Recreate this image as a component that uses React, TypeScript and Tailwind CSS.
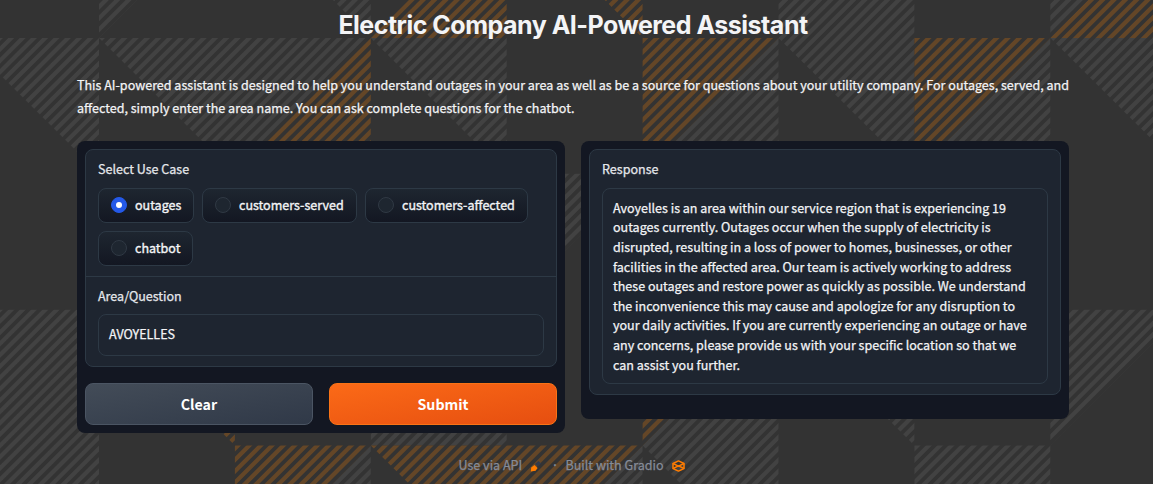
import React from "react";

const S = 135.9;
const X0 = -36.9;
const Y0 = -98;

type Tri = [col: number, row: number, shape: "ul" | "lr" | "ur" | "full", color: "g" | "o"];

const tiles: Tri[] = [
  [1, 0, "ul", "g"], [2, 0, "ur", "g"], [3, 0, "lr", "o"], [4, 0, "ur", "o"], [6, 0, "full", "g"], [8, 0, "ul", "g"], [8, 0, "lr", "o"],
  [0, 1, "ur", "g"], [1, 1, "ur", "g"], [2, 1, "ul", "g"], [2, 1, "lr", "o"], [3, 1, "ur", "g"], [5, 1, "ul", "o"], [5, 1, "lr", "g"],
  [6, 1, "ur", "g"], [7, 1, "ul", "o"], [7, 1, "lr", "g"], [8, 1, "ur", "g"],
  [4, 2, "ul", "g"],
  [0, 3, "full", "g"], [1, 3, "ur", "o"], [3, 3, "full", "g"], [5, 3, "ul", "o"], [5, 3, "lr", "g"], [6, 3, "ur", "g"], [8, 3, "ul", "g"],
  [0, 4, "full", "g"], [2, 4, "ul", "o"], [2, 4, "lr", "g"], [3, 4, "ur", "o"], [4, 4, "ul", "o"], [4, 4, "lr", "g"], [5, 4, "ur", "g"], [7, 4, "full", "g"],
];

function points([c, r, shape]: Tri) {
  const x = X0 + c * S;
  const y = Y0 + r * S;
  const p = {
    ul: [[0, 0], [S, 0], [0, S]],
    lr: [[S, 0], [S, S], [0, S]],
    ur: [[0, 0], [S, 0], [S, S]],
    full: [[0, 0], [S, 0], [S, S], [0, S]],
  }[shape];
  return p.map(([a, b]) => `${x + a},${y + b}`).join(" ");
}

const PERIOD = S / 12;
const H = 5 * S;
const stripes = Array.from({ length: 172 }, (_, i) => {
  const x = X0 + i * PERIOD;
  return `M${x} ${Y0}h6l${-H} ${H}h-6Z`;
}).join("");

function Backdrop() {
  return (
    <svg className="absolute inset-0 -z-10" width="1153" height="484" aria-hidden="true">
      {[["g", "#424242"], ["o", "#644627"]].map(([id, fill]) => (
        <g key={id}>
          <clipPath id={id}>
            {tiles.filter((t) => t[3] === id).map((t, i) => <polygon key={i} points={points(t)} />)}
          </clipPath>
          <path d={stripes} fill={fill} clipPath={`url(#${id})`} />
        </g>
      ))}
    </svg>
  );
}

function Radio({ label, checked, width }: { label: string; checked?: boolean; width: string }) {
  return (
    <label className={`flex h-[35px] items-center rounded-lg border border-[#2d3945] bg-linear-to-b from-[#1e2630] to-[#131722] pl-3 text-[#f3f4f6] ${width}`}>
      <span className={`mb-px flex size-4 items-center justify-center rounded-full border ${checked ? "border-[#2459e8] bg-[#2459e8]" : "border-[#303944] bg-[#1e2630]"}`}>
        {checked && <span className="size-1.5 rounded-full bg-white" />}
      </span>
      <span className="mb-px ml-2 leading-[18px] whitespace-nowrap [-webkit-text-stroke:0.35px_#f3f4f6]">{label}</span>
    </label>
  );
}

const response = [
  "Avoyelles is an area within our service region that is experiencing 19",
  "outages currently. Outages occur when the supply of electricity is",
  "disrupted, resulting in a loss of power to homes, businesses, or other",
  "facilities in the affected area. Our team is actively working to address",
  "these outages and restore power as quickly as possible. We understand",
  "the inconvenience this may cause and apologize for any disruption to",
  "your daily activities. If you are currently experiencing an outage or have",
  "any concerns, please provide us with your specific location so that we",
  "can assist you further.",
];

export default function App() {
  return (
    <div className="relative isolate h-[484px] w-[1153px] overflow-hidden bg-[#333333] px-[77px] font-['Noto_Sans_CJK_JP','Noto_Sans_CJK_SC',sans-serif] text-[12.54px] text-[#f3f4f6] [-webkit-text-stroke:0.25px_currentColor]">
      <Backdrop />
      <h1 className="h-[73px] pt-[7px] pr-[7px] text-center font-['Inter',sans-serif] text-[25px] leading-9 font-bold tracking-[-0.5px] whitespace-nowrap [-webkit-text-stroke:0]">
        Electric Company AI-Powered Assistant
      </h1>
      <p className="h-[68px] leading-[23px] whitespace-nowrap">
        This AI-powered assistant is designed to help you understand outages in your area as well as be a source for questions about your utility company. For outages, served, and
        <br />
        affected, simply enter the area name. You can ask complete questions for the chatbot.
      </p>
      <main className="flex items-start gap-4">
        <section className="h-[292px] w-[488px] rounded-lg bg-[#131722] p-2">
          <div className="h-[218px] overflow-hidden rounded-lg border border-[#2d3945] bg-[#1e2530]">
            <div className="h-[127px] border-b border-[#2d3945] px-3 pt-[9px]">
              <div className="leading-5 text-[#e5e7eb]">Select Use Case</div>
              <div className="mt-[9px] flex flex-wrap gap-2">
                <Radio label="outages" checked width="w-24" />
                <Radio label="customers-served" width="w-[155px]" />
                <Radio label="customers-affected" width="w-[163px]" />
                <Radio label="chatbot" width="w-[95px]" />
              </div>
            </div>
            <div className="px-3 pt-[9px]">
              <div className="leading-5 text-[#e5e7eb]">Area/Question</div>
              <div className="mt-2 h-[42px] rounded-lg border border-[#2d3945] px-2.5 leading-[38px]">AVOYELLES</div>
            </div>
          </div>
          <div className="mt-4 grid grid-cols-2 gap-4 text-[14.2px] font-bold text-white [-webkit-text-stroke:0]">
            <button className="h-[42px] rounded-lg border border-[#4b5563] bg-linear-to-br from-[#434c58] to-[#303948] pt-px">Clear</button>
            <button className="h-[42px] rounded-lg border border-[#f97316] bg-linear-to-br from-[#fb6a17] to-[#e64e10] pt-px">Submit</button>
          </div>
        </section>
        <section className="h-[278px] w-[488px] rounded-lg bg-[#131722] p-2">
          <div className="h-[246px] rounded-lg border border-[#2d3945] bg-[#1e2530] px-3 pt-[9px]">
            <div className="leading-5 text-[#e5e7eb]">Response</div>
            <div className="mt-[9px] h-[196px] rounded-lg border border-[#2d3945] px-2.5 pt-[8.8px] leading-[19.6px]">
              {response.map((l) => <div key={l} className="whitespace-nowrap">{l}</div>)}
            </div>
          </div>
        </section>
      </main>
      <footer className="mt-[22px] flex h-5 items-center pl-[381.5px] leading-5 text-[#858b98]">
        <span className="w-16 whitespace-nowrap">Use via API</span>
        <svg className="mt-px ml-[7px] size-3" viewBox="0 0 12 12">
          <path d="M5 4 8.5 1l2.5 2.5-3 3Z" fill="#303a4c" />
          <path d="M.8 11.5 1.2 7.5 4.5 5 7.6 8 5.6 10.7Z" fill="#ff7c00" />
        </svg>
        <span className="ml-[7px] w-[17px] pr-1 text-center">·</span>
        <span className="w-[98px] whitespace-nowrap">Built with Gradio</span>
        <svg className="mt-px ml-2 h-3 w-[13px]" viewBox="0 0 13 12" fill="none" stroke="#ff7c00" strokeWidth="1.5" strokeLinejoin="round">
          <path d="M1 3.5 6.5.9 12 3.5 6.5 6.1Z" />
          <path d="M1 8.5 6.5 5.9 12 8.5 6.5 11.1Z" />
          <path d="M1 3.5v5M12 3.5v5" />
        </svg>
      </footer>
    </div>
  );
}
